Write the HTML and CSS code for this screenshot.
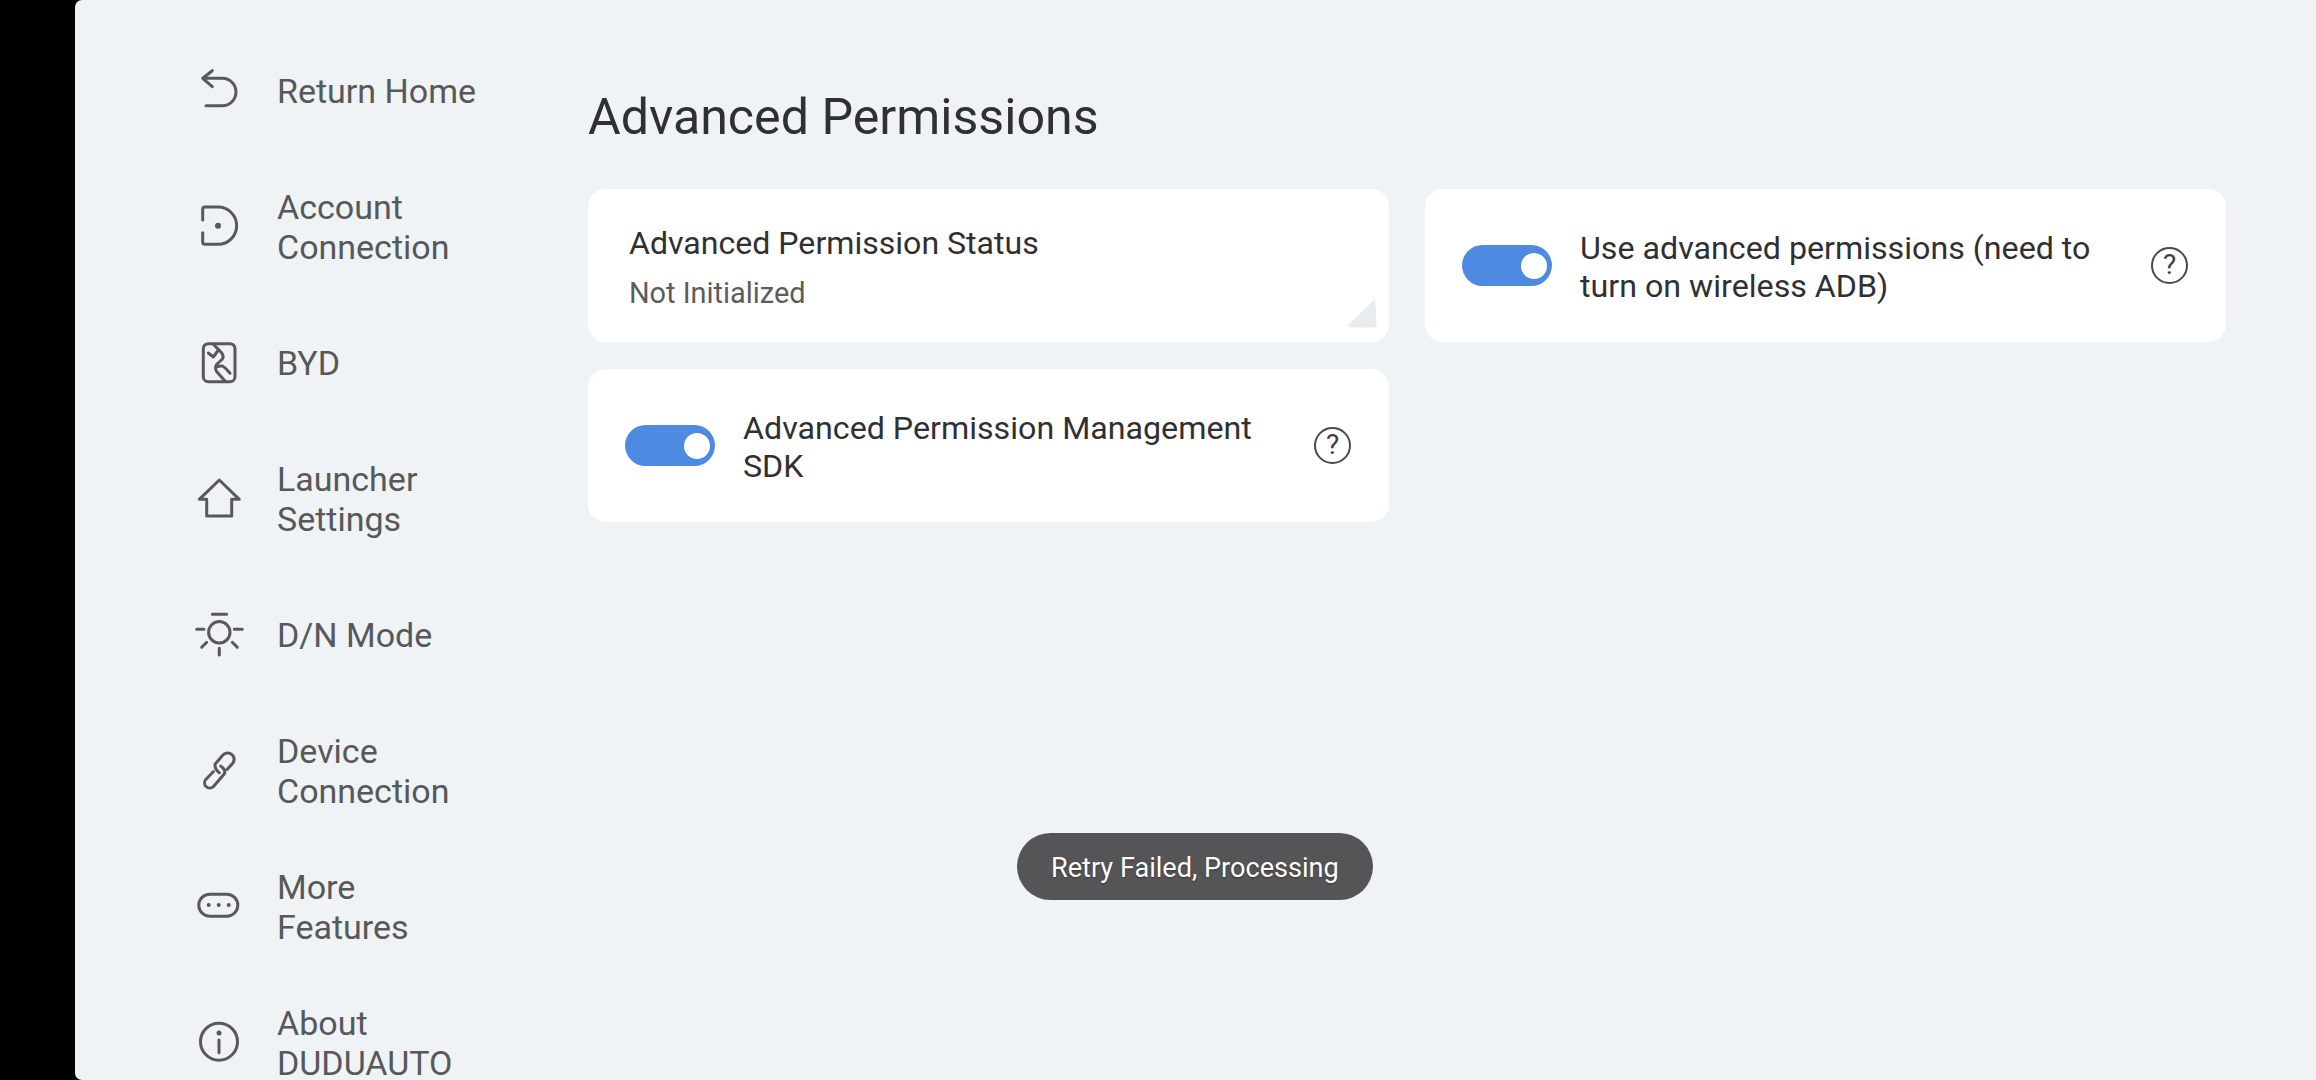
FILE: index.html
```html
<!DOCTYPE html>
<html lang="en">
<head>
<meta charset="utf-8">
<title>Advanced Permissions</title>
<link rel="stylesheet" href="styles.css">
</head>
<body>
<div class="panel">
  <nav class="sidebar">
    <a class="nav-item">
      <svg class="nav-icon" viewBox="0 -1 60 60"><path d="M23.3 9.7 13.7 17.3 23.3 25.7M13.7 17.3H33.3A13.7 13.7 0 0 1 33.3 44.7H17"/></svg>
      <span class="nav-label">Return Home</span>
    </a>
    <a class="nav-item">
      <svg class="nav-icon" viewBox="0 0 60 60"><path d="M13.7 24V13a2 2 0 0 1 2-2H29a18.6 18.6 0 0 1 0 37.3H15.7a2 2 0 0 1-2-2V36.7"/><circle class="fill" cx="29" cy="29.7" r="3"/></svg>
      <span class="nav-label">Account Connection</span>
    </a>
    <a class="nav-item">
      <svg class="nav-icon" viewBox="0 -1 60 60"><rect x="14.3" y="10.7" width="31.7" height="38" rx="5"/><path d="M19.3 20 24.3 24 29 17.5M24.3 11.3 31 18Q36 23 33 26.5L28 31Q25 35 28 39L36 48M27 34Q30 33 33 33 35 33 41 40.3"/></svg>
      <span class="nav-label">BYD</span>
    </a>
    <a class="nav-item">
      <svg class="nav-icon" viewBox="0 -1 60 60"><path d="M30.3 11 10.3 30.3H17.7V47H42.7V30.3H50.3Z"/></svg>
      <span class="nav-label">Launcher Settings</span>
    </a>
    <a class="nav-item">
      <svg class="nav-icon" viewBox="0 -1 60 60"><circle cx="30.3" cy="27.3" r="10.7"/><path d="M23.3 9.3H37.7M7.7 24.3H15M45.3 24.3H53.3M12.7 42.3 17.7 37.3M48.3 42.3 43.3 37.3M30.3 43.3V50"/></svg>
      <span class="nav-label">D/N Mode</span>
    </a>
    <a class="nav-item">
      <svg class="nav-icon" viewBox="0 6.7 60 60"><path d="M30.3 39.4Q25.7 36 26 31L33.7 22A6.4 6.4 0 0 1 43.7 30L38.3 36M24.3 38.4 17 46A5.2 5.2 0 0 0 24.3 53.4L35 41Q37 38.4 34.3 35L31.7 32.7"/></svg>
      <span class="nav-label">Device Connection</span>
    </a>
    <a class="nav-item">
      <svg class="nav-icon" viewBox="0 0 60 60"><rect x="9.8" y="18.2" width="39" height="22" rx="11"/><circle class="fill" cx="19.7" cy="29" r="2"/><circle class="fill" cx="29.7" cy="29" r="2"/><circle class="fill" cx="39.7" cy="29" r="2"/></svg>
      <span class="nav-label">More Features</span>
    </a>
    <a class="nav-item">
      <svg class="nav-icon" viewBox="0 1 60 60"><circle cx="30" cy="30.7" r="18.5"/><circle class="fill" cx="30" cy="22" r="2.5"/><path d="M30 29V41.7"/></svg>
      <span class="nav-label">About DUDUAUTO</span>
    </a>
  </nav>
  <main class="content">
    <h1 class="page-title">Advanced Permissions</h1>
    <div class="card-grid">
      <section class="card card-status">
        <div class="card-title">Advanced Permission Status</div>
        <div class="card-sub">Not Initialized</div>
        <svg class="corner" viewBox="0 0 30 30"><path d="M26 3 3 26H27Z"/></svg>
      </section>
      <section class="card card-toggle">
        <span class="toggle"><span class="knob"></span></span>
        <span class="card-text">Use advanced permissions (need to turn on wireless ADB)</span>
        <span class="help">?</span>
      </section>
      <section class="card card-toggle">
        <span class="toggle"><span class="knob"></span></span>
        <span class="card-text">Advanced Permission Management SDK</span>
        <span class="help">?</span>
      </section>
    </div>
  </main>
  <div class="toast">Retry Failed, Processing</div>
</div>
</body>
</html>
```
FILE: styles.css
```css
* { box-sizing: border-box; }
html, body { height: 100%; }
body {
  margin: 0;
  padding-left: 75px;
  background: #000;
  font-family: Roboto, "Liberation Sans", sans-serif;
  overflow: hidden;
}
.panel {
  position: relative;
  display: flex;
  height: 1080px;
  background: #eff3f6;
  border-radius: 7px 0 0 7px;
  overflow: hidden;
}
.sidebar {
  flex: 0 0 513px;
  display: flex;
  flex-direction: column;
  padding: 22px 0 0 114px;
}
.nav-item {
  flex: 0 0 136px;
  display: flex;
  align-items: center;
  gap: 28px;
}
.nav-icon {
  flex: none;
  width: 60px;
  height: 60px;
  fill: none;
  stroke: #58595b;
  stroke-width: 3;
  stroke-linecap: round;
  stroke-linejoin: round;
}
.nav-icon .fill { fill: #58595b; stroke: none; }
.nav-label {
  width: 205px;
  padding-top: 1px;
  font-size: 34px;
  line-height: 40px;
  color: #57585a;
}
.content {
  flex: 1;
  padding: 87px 90px 0 0;
}
.page-title {
  margin: 0 0 42px;
  font-size: 50.15px;
  font-weight: 400;
  line-height: 60px;
  color: #303032;
}
.card-grid {
  display: grid;
  grid-template-columns: 801px 801px;
  grid-auto-rows: 153px;
  column-gap: 36px;
  row-gap: 27px;
}
.card {
  position: relative;
  background: #fff;
  border-radius: 18px;
}
.card-status {
  padding: 35px 41px 0;
}
.card-title {
  font-size: 32.1px;
  line-height: 38px;
  color: #303032;
}
.card-sub {
  margin-top: 13px;
  font-size: 28.9px;
  line-height: 36px;
  color: #5b5c5e;
}
.corner {
  position: absolute;
  right: 11px;
  bottom: 12px;
  width: 31px;
  height: 31px;
  fill: #e9ecee;
  stroke: #e9ecee;
  stroke-width: 3;
  stroke-linejoin: round;
}
.card-toggle {
  display: flex;
  align-items: center;
  padding: 0 38px 0 37px;
}
.toggle {
  flex: none;
  display: flex;
  align-items: center;
  justify-content: flex-end;
  width: 90px;
  height: 41px;
  padding-right: 5px;
  margin-right: 28px;
  border-radius: 21px;
  background: #4f8ae2;
}
.knob {
  width: 26px;
  height: 26px;
  border-radius: 50%;
  background: #fff;
}
.card-text {
  flex: 1;
  padding: 2px 50px 0 0;
  font-size: 32.2px;
  line-height: 38px;
  color: #303032;
}
.help {
  flex: none;
  width: 37px;
  height: 37px;
  border: 2.5px solid #4a4a4c;
  border-radius: 50%;
  font-size: 28px;
  line-height: 32px;
  text-align: center;
  color: #3f3f41;
}
.toast {
  position: absolute;
  left: 942px;
  top: 833px;
  height: 67px;
  padding: 2px 34px 0;
  border-radius: 34px;
  background: #555557;
  color: #fff;
  font-size: 27.1px;
  line-height: 67px;
  text-shadow: 0 1px 2px rgba(0,0,0,.4);
}
```
